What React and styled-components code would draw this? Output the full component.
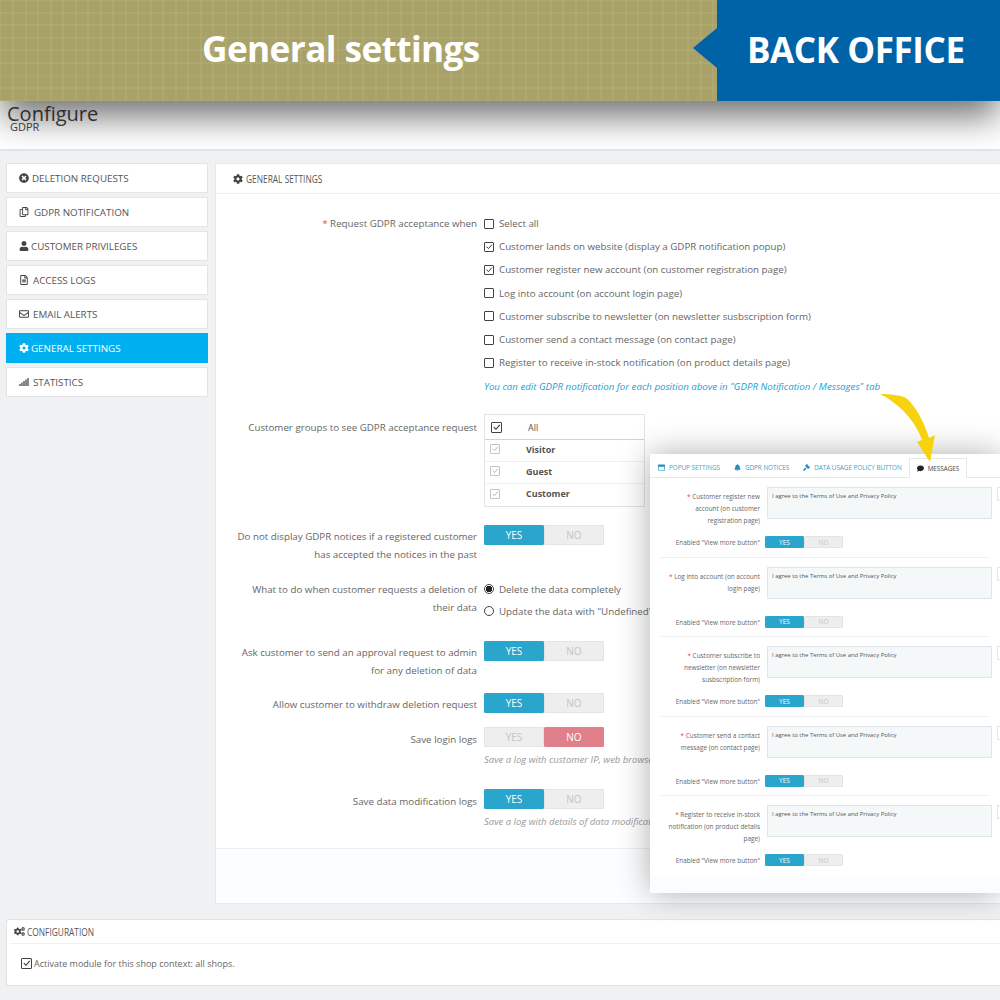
import React from "react";
import styled, { createGlobalStyle } from "styled-components";
import {
  FaBell,
  FaCog,
  FaCogs,
  FaComment,
  FaGavel,
  FaRegCopy,
  FaRegEnvelope,
  FaRegFileAlt,
  FaRegWindowMaximize,
  FaSignal,
  FaTimesCircle,
  FaUser
} from "react-icons/fa";

const GlobalStyle = createGlobalStyle`
  html, body {
    margin: 0;
    padding: 0;
    background: #eff1f2;
  }
  * {
    box-sizing: border-box;
  }
`;

const menu = [
  { label: "DELETION REQUESTS", icon: <FaTimesCircle />, gap: 3 },
  { label: "GDPR NOTIFICATION", icon: <FaRegCopy />, gap: 5 },
  { label: "CUSTOMER PRIVILEGES", icon: <FaUser />, gap: 2 },
  { label: "ACCESS LOGS", icon: <FaRegFileAlt />, gap: 4 },
  { label: "EMAIL ALERTS", icon: <FaRegEnvelope />, gap: 4 },
  { label: "GENERAL SETTINGS", icon: <FaCog />, gap: 2, active: true },
  { label: "STATISTICS", icon: <FaSignal />, gap: 4 }
];

const positions = [
  { label: "Select all", checked: false },
  { label: "Customer lands on website (display a GDPR notification popup)", checked: true },
  { label: "Customer register new account (on customer registration page)", checked: true },
  { label: "Log into account (on account login page)", checked: false },
  { label: "Customer subscribe to newsletter (on newsletter susbscription form)", checked: false },
  { label: "Customer send a contact message (on contact page)", checked: false },
  { label: "Register to receive in-stock notification (on product details page)", checked: false }
];

const messages = [
  ["Customer register new", "account (on customer", "registration page)"],
  ["Log into account (on account", "login page)"],
  ["Customer subscribe to", "newsletter (on newsletter", "susbscription form)"],
  ["Customer send a contact", "message (on contact page)"],
  ["Register to receive in-stock", "notification (on product details", "page)"]
];

const Page = styled.div`
  position: relative;
  width: 1000px;
  height: 1000px;
  overflow: hidden;
  background: #eff1f2;
  font-family: "Open Sans", sans-serif;
  color: #666;
`;

const Banner = styled.div`
  position: relative;
  z-index: 2;
  display: flex;
  height: 101px;
  box-shadow: 0 18px 34px -2px rgba(0, 0, 0, 0.55);
`;

const BannerLeft = styled.div`
  width: 717px;
  display: flex;
  align-items: center;
  padding: 0 0 6px 202px;
  background-color: #a9a268;
  background-image:
    repeating-linear-gradient(90deg, rgba(255, 255, 240, 0.06) 0 1.5px, transparent 1.5px 12.5px),
    repeating-linear-gradient(0deg, rgba(255, 255, 240, 0.06) 0 1.5px, transparent 1.5px 12.5px);
  color: #fff;
  font-size: 35.2px;
  font-weight: 700;
  letter-spacing: -0.6px;
`;

const BannerRight = styled.div`
  position: relative;
  flex: 1;
  display: flex;
  align-items: center;
  padding: 0 0 2px 30px;
  background: #0063a8;
  color: #fff;
  font-size: 35px;
  font-weight: 700;
  letter-spacing: -0.4px;
  &::before {
    content: "";
    position: absolute;
    left: -24px;
    top: 28px;
    border-style: solid;
    border-width: 20px 24px 20px 0;
    border-color: transparent #0063a8 transparent transparent;
  }
`;

const Header = styled.div`
  height: 50px;
  padding: 1px 0 0 7px;
  background: #fff;
  border-bottom: 2px solid #e4e7e9;
  color: #444;
`;

const Title = styled.div`
  font-size: 20px;
  line-height: 24px;
`;

const Subtitle = styled.div`
  margin: -5px 0 0 3px;
  font-size: 11px;
  line-height: 12px;
`;

const Body = styled.div`
  display: flex;
  align-items: flex-start;
  gap: 7px;
  padding: 12px 0 0 6px;
`;

const Sidebar = styled.nav`
  width: 202px;
  display: flex;
  flex-direction: column;
  gap: 4px;
`;

const MenuItem = styled.div`
  height: 30px;
  display: flex;
  align-items: center;
  gap: ${props => props.$gap}px;
  padding-left: 12px;
  background: ${props => (props.$active ? "#00aff0" : "#fff")};
  border: 1px solid ${props => (props.$active ? "#00aff0" : "#e3e5e7")};
  color: ${props => (props.$active ? "#fff" : "#555")};
  font-size: 9.8px;
  svg {
    font-size: 10px;
    flex: none;
    color: ${props => (props.$active ? "#fff" : "#444")};
  }
`;

const Panel = styled.section`
  flex: 1;
  height: 741px;
  display: flex;
  flex-direction: column;
  background: #fff;
  border: 1px solid #e6e8ea;
  border-right: 0;
`;

const PanelHead = styled.div`
  height: 30px;
  flex: none;
  display: flex;
  align-items: center;
  gap: 3px;
  padding-left: 17px;
  border-bottom: 1px solid #eef0f1;
  color: #555;
  svg {
    font-size: 10px;
    color: #444;
  }
`;

const Condensed = styled.span`
  display: inline-block;
  font-size: 11px;
  transform: scaleX(0.76);
  transform-origin: left center;
  white-space: nowrap;
`;

const Form = styled.div`
  flex: 1;
  display: flex;
  flex-direction: column;
`;

const Row = styled.div`
  display: grid;
  grid-template-columns: 261px 1fr;
  column-gap: 7px;
  margin-top: ${props => props.$top || 0}px;
`;

const Label = styled.div`
  text-align: right;
  font-size: 9.75px;
  line-height: 18px;
  color: #666;
  padding-top: ${props => props.$pad || 0}px;
`;

const Star = styled.span`
  color: #d9534f;
`;

const Control = styled.div`
  min-width: 0;
  white-space: nowrap;
`;

const CheckRow = styled.div`
  height: 23.2px;
  display: flex;
  align-items: center;
  gap: 5px;
  font-size: 9.75px;
  color: #666;
`;

const Box = styled.span`
  width: ${props => props.$size || 10}px;
  height: ${props => props.$size || 10}px;
  flex: none;
  display: inline-flex;
  align-items: center;
  justify-content: center;
  background: #fff;
  border: 1px solid ${props => (props.$faded ? "#c4c4c4" : "#444")};
  border-radius: 1px;
  svg {
    width: 100%;
    height: 100%;
    stroke: ${props => (props.$faded ? "#b5b5b5" : "#333")};
    fill: none;
    stroke-width: 1.2;
  }
`;

const Tick = ({ size, faded }) => (
  <Box $size={size} $faded={faded}>
    <svg viewBox="0 0 10 10">
      <path d="M2 4.6 L4.4 7 L8.6 2" />
    </svg>
  </Box>
);

const Hint = styled.div`
  margin-top: 5px;
  font-size: ${props => (props.$blue ? 9.7 : 9.5)}px;
  font-style: italic;
  line-height: 16px;
  color: ${props => (props.$blue ? "#1ba0d5" : "#999")};
`;

const Groups = styled.div`
  width: 161px;
  height: 93px;
  border: 1px solid #dfe3e6;
  font-size: 9px;
  color: #555;
`;

const GroupHead = styled.div`
  height: 25px;
  display: flex;
  align-items: center;
  padding-left: 6px;
  border-bottom: 1px solid #bcdbe9;
  font-weight: 400;
`;

const GroupRow = styled.div`
  height: 22px;
  display: flex;
  align-items: center;
  padding: 0 0 3px 5px;
  border-bottom: 1px solid #f0f0f0;
  font-weight: 700;
  &:last-child {
    border-bottom: 0;
  }
`;

const GroupName = styled.span`
  margin-left: ${props => props.$left}px;
`;

const Switch = styled.div`
  display: flex;
  width: ${props => (props.$small ? 78 : 120)}px;
  height: ${props => (props.$small ? 12 : 20)}px;
  font-size: ${props => (props.$small ? 6.5 : 10)}px;
`;

const SwitchSide = styled.div`
  width: 50%;
  display: flex;
  align-items: center;
  justify-content: center;
  border-radius: 1px;
  background: ${props => (props.$on ? props.$color : "#eee")};
  color: ${props => (props.$on ? "#fff" : "#c4c4c4")};
  border: 1px solid ${props => (props.$on ? props.$color : "#e4e4e4")};
`;

const Toggle = ({ value = "yes", small }) => (
  <Switch $small={small}>
    <SwitchSide $on={value === "yes"} $color="#2aa5cc">YES</SwitchSide>
    <SwitchSide $on={value === "no"} $color="#e0808a">NO</SwitchSide>
  </Switch>
);

const RadioList = styled.div`
  margin-top: -1px;
  white-space: nowrap;
`;

const RadioRow = styled.div`
  height: 22px;
  display: flex;
  align-items: center;
  gap: 5px;
  font-size: 9.75px;
  color: #666;
`;

const Radio = styled.span`
  width: 10px;
  height: 10px;
  flex: none;
  border-radius: 50%;
  border: 1px solid #444;
  background: ${props => (props.$on ? "radial-gradient(circle, #222 0 3px, #fff 3.5px)" : "#fff")};
`;

const PanelFoot = styled.div`
  height: 55px;
  flex: none;
  background: #fcfdfe;
  border-top: 1px solid #eef0f1;
`;

const ConfigPanel = styled.section`
  margin: 15px 0 0 6px;
  height: 67px;
  background: #fff;
  border: 1px solid #e2e4e6;
  border-right: 0;
  border-radius: 3px 0 0 3px;
`;

const ConfigHead = styled.div`
  height: 24px;
  margin-left: 3px;
  display: flex;
  align-items: center;
  gap: 2px;
  padding-left: 4px;
  border-bottom: 1px solid #eef0f1;
  color: #555;
  svg {
    font-size: 11px;
    color: #444;
  }
`;

const ConfigBody = styled.div`
  display: flex;
  align-items: center;
  gap: 2px;
  padding: 13px 0 0 14px;
  font-size: 9px;
  color: #666;
`;

const Overlay = styled.section`
  position: absolute;
  z-index: 3;
  left: 650px;
  top: 454px;
  width: 350px;
  height: 439px;
  background: #fff;
  box-shadow: 0 0 30px rgba(0, 0, 0, 0.32);
  display: flex;
  flex-direction: column;
`;

const Tabs = styled.div`
  height: 24px;
  flex: none;
  display: flex;
  align-items: flex-end;
  padding-left: 8px;
  border-bottom: 1px solid #e8e8e8;
`;

const Tab = styled.div`
  height: ${props => (props.$active ? 20 : 19)}px;
  display: flex;
  align-items: center;
  gap: 4px;
  margin-left: ${props => props.$left}px;
  padding: 0 ${props => (props.$active ? 7 : 0)}px;
  font-size: 6.3px;
  color: ${props => (props.$active ? "#444" : "#3aa3cc")};
  background: #fff;
  border: ${props => (props.$active ? "1px solid #e8e8e8" : "0")};
  border-bottom: 0;
  margin-bottom: ${props => (props.$active ? -1 : 0)}px;
  svg {
    font-size: 7px;
    color: ${props => (props.$active ? "#222" : "#1f8fc0")};
  }
`;

const MsgRow = styled.div`
  height: 79.6px;
  flex: none;
  padding-top: 9px;
  margin: 0 10px 0 10px;
  border-bottom: 1px solid #f0f1f2;
  &:nth-last-child(2) {
    border-bottom: 0;
  }
`;

const MsgTop = styled.div`
  display: grid;
  grid-template-columns: 100px 225px 1fr;
  column-gap: 7px;
  height: 48px;
`;

const MsgLabel = styled.div`
  text-align: right;
  font-size: 6.4px;
  line-height: 12px;
  color: #666;
  margin-left: -10px;
  padding-top: ${props => props.$pad || 0}px;
`;

const MsgInput = styled.div`
  height: 32px;
  padding: 3px 4px;
  font-size: 5.9px;
  line-height: 10px;
  color: #555;
  background: #f4f8f9;
  border: 1px solid #dfe5e8;
  white-space: nowrap;
`;

const LangButton = styled.div`
  height: 14px;
  width: 20px;
  margin-left: -2px;
  border: 1px solid #e6e6e6;
`;

const MsgBottom = styled.div`
  display: grid;
  grid-template-columns: 100px 1fr;
  column-gap: 5px;
  align-items: center;
`;

const MsgFoot = styled.div`
  flex: 1;
  background: #fbfcfd;
`;

const Arrow = styled.svg`
  position: absolute;
  z-index: 4;
  left: 878px;
  top: 392px;
  width: 60px;
  height: 72px;
`;

export default function App() {
  return (
    <Page>
      <GlobalStyle />
      <Banner>
        <BannerLeft>General settings</BannerLeft>
        <BannerRight>BACK OFFICE</BannerRight>
      </Banner>
      <Header>
        <Title>Configure</Title>
        <Subtitle>GDPR</Subtitle>
      </Header>
      <Body>
        <Sidebar>
          {menu.map(item => (
            <MenuItem key={item.label} $active={item.active} $gap={item.gap}>
              {item.icon}
              {item.label}
            </MenuItem>
          ))}
        </Sidebar>
        <Panel>
          <PanelHead>
            <FaCog />
            <Condensed>GENERAL SETTINGS</Condensed>
          </PanelHead>
          <Form>
            <Row $top={18}>
              <Label $pad={3}>
                <Star>*</Star> Request GDPR acceptance when
              </Label>
              <Control>
                {positions.map(pos => (
                  <CheckRow key={pos.label}>
                    {pos.checked ? <Tick /> : <Box />}
                    {pos.label}
                  </CheckRow>
                ))}
                <Hint $blue>
                  You can edit GDPR notification for each position above in "GDPR Notification / Messages" tab
                </Hint>
              </Control>
            </Row>
            <Row $top={19}>
              <Label $pad={5}>Customer groups to see GDPR acceptance request</Label>
              <Groups>
                <GroupHead>
                  <Tick size={11} />
                  <GroupName $left={26}>All</GroupName>
                </GroupHead>
                {["Visitor", "Guest", "Customer"].map(name => (
                  <GroupRow key={name}>
                    <Tick faded />
                    <GroupName $left={26}>{name}</GroupName>
                  </GroupRow>
                ))}
              </Groups>
            </Row>
            <Row $top={18}>
              <Label $pad={3}>
                Do not display GDPR notices if a registered customer
                <br />
                has accepted the notices in the past
              </Label>
              <Toggle />
            </Row>
            <Row $top={15}>
              <Label $pad={2}>
                What to do when customer requests a deletion of
                <br />
                their data
              </Label>
              <RadioList>
                <RadioRow>
                  <Radio $on />
                  Delete the data completely
                </RadioRow>
                <RadioRow>
                  <Radio />
                  Update the data with "Undefined" value
                </RadioRow>
              </RadioList>
            </Row>
            <Row $top={19}>
              <Label $pad={3}>
                Ask customer to send an approval request to admin
                <br />
                for any deletion of data
              </Label>
              <Toggle />
            </Row>
            <Row $top={13}>
              <Label $pad={3}>Allow customer to withdraw deletion request</Label>
              <Toggle />
            </Row>
            <Row $top={13}>
              <Label $pad={4}>Save login logs</Label>
              <Control>
                <Toggle value="no" />
                <Hint>Save a log with customer IP, web browser and device information</Hint>
              </Control>
            </Row>
            <Row $top={21}>
              <Label $pad={4}>Save data modification logs</Label>
              <Control>
                <Toggle />
                <Hint>Save a log with details of data modification made by customers</Hint>
              </Control>
            </Row>
          </Form>
          <PanelFoot />
        </Panel>
      </Body>
      <ConfigPanel>
        <ConfigHead>
          <FaCogs />
          <Condensed>CONFIGURATION</Condensed>
        </ConfigHead>
        <ConfigBody>
          <Tick size={11} />
          Activate module for this shop context: all shops.
        </ConfigBody>
      </ConfigPanel>

      <Overlay>
        <Tabs>
          <Tab $left={0}>
            <FaRegWindowMaximize />
            POPUP SETTINGS
          </Tab>
          <Tab $left={14}>
            <FaBell />
            GDPR NOTICES
          </Tab>
          <Tab $left={14}>
            <FaGavel />
            DATA USAGE POLICY BUTTON
          </Tab>
          <Tab $left={7} $active>
            <FaComment />
            MESSAGES
          </Tab>
        </Tabs>
        {messages.map((lines, i) => (
          <MsgRow key={i}>
            <MsgTop>
              <MsgLabel $pad={4}>
                {lines.map((line, j) => (
                  <div key={j}>
                    {j === 0 && <Star>* </Star>}
                    {line}
                  </div>
                ))}
              </MsgLabel>
              <MsgInput>I agree to the Terms of Use and Privacy Policy</MsgInput>
              <LangButton />
            </MsgTop>
            <MsgBottom>
              <MsgLabel $pad={2}>Enabled "View more button"</MsgLabel>
              <Toggle small />
            </MsgBottom>
          </MsgRow>
        ))}
        <MsgFoot />
      </Overlay>
      <Arrow viewBox="0 0 60 72">
        <path d="M2 2 C12 2 22 3 28 6 C38 14 46 30 51 46 L57 43 L52 70 L39 50 L44 48 C38 30 22 12 2 2 Z" fill="#f7d20f" />
      </Arrow>
    </Page>
  );
}
